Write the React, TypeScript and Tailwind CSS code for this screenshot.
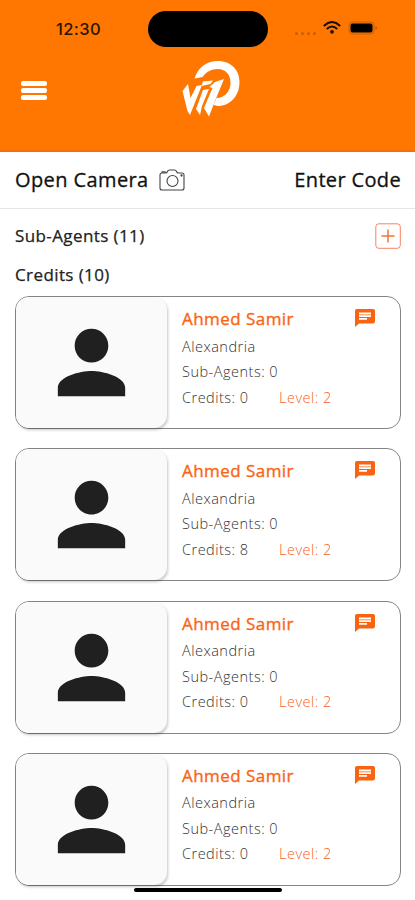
import React from "react";

const agents = [
  { name: "Ahmed Samir", city: "Alexandria", sub: 0, credits: 0, level: 2 },
  { name: "Ahmed Samir", city: "Alexandria", sub: 0, credits: 8, level: 2 },
  { name: "Ahmed Samir", city: "Alexandria", sub: 0, credits: 0, level: 2 },
  { name: "Ahmed Samir", city: "Alexandria", sub: 0, credits: 0, level: 2 },
];

function Logo() {
  return (
    <svg viewBox="0 0 60 58" className="h-[58px] w-[60px]" aria-label="ViP">
      <g fill="#fff">
        <path d="M12.500 17.500C16 7 24 0 36 0C49 0 57.500 9 57.500 21C57.500 35 48 45 36 45L31.500 44L34.500 37C43 37 48.500 30 48.500 22C48.500 13 43 8 36 8C29 8 24 11 20.500 16Z" />
        <path d="M0.500 30L6 23L8.500 37L14.500 25L20 24L8 54L5.500 50Z" />
        <path d="M21 29L27 28L20 45L18 54L14 48Z" />
        <path d="M21 20.500L31 19.500L28.500 23L19.500 25Z" />
        <path d="M33 21L42 18L33 40L27 55.500L22 47L30.500 27L27.500 26Z" />
      </g>
    </svg>
  );
}

function StatusBar() {
  return (
    <div className="flex h-[57px] pt-[11px]">
      <div className="w-[148px] pl-[56px] pt-[7px] font-['Inter',sans-serif] text-[16.500px] font-medium leading-[22px] tracking-[0.4px] text-[#2b1500]">12:30</div>
      <div className="h-[36px] w-[120px] rounded-full bg-black" />
      <div className="ml-[27px] flex pt-[10px]">
        <div className="flex gap-[3px] pt-[11px]">
          {[0, 1, 2, 3].map((i) => (
            <span key={i} className="size-[3px] rounded-full bg-[#c96000]" />
          ))}
        </div>
        <svg viewBox="0 0 18 13" className="ml-[7px] h-[13px] w-[18px]" fill="none" stroke="#1c0d00" strokeWidth="2">
          <path d="M0.800 5Q9 -3 17.200 5M3.800 8Q9 3 14.200 8" />
          <circle cx="9" cy="10.800" r="1.900" fill="#1c0d00" stroke="none" />
        </svg>
        <svg viewBox="0 0 30 14" className="ml-[7px] h-[14px] w-[30px]">
          <rect x="1" y="1" width="25" height="12" rx="3.500" fill="none" stroke="#c96000" />
          <rect x="2.500" y="2.500" width="22" height="9" rx="2" fill="#000" />
          <path d="M27.500 5v4c2-.8 2-3.200 0-4z" fill="#b95700" />
        </svg>
      </div>
    </div>
  );
}

function AgentCard({ agent }: { agent: (typeof agents)[number] }) {
  return (
    <div className="flex h-[133px] rounded-[14px] border border-[#858585] bg-white">
      <div className="flex w-[151px] items-center justify-center rounded-[13px] bg-[#fafafa] pr-[1px] shadow-[1px_2px_3px_rgba(0,0,0,0.22)]">
        <svg viewBox="0 0 24 24" className="h-[101px] w-[101px] shrink-0" fill="#202020">
          <path d="M12 12c2.21 0 4-1.79 4-4s-1.79-4-4-4-4 1.79-4 4 1.79 4 4 4zm0 2c-2.67 0-8 1.34-8 4v2h16v-2c0-2.66-5.33-4-8-4z" />
        </svg>
      </div>
      <div className="flex-1 pl-[15px] pt-[11px] text-[14.500px] font-light text-[#333]">
        <div className="flex justify-between pr-[25px]">
          <span className="text-[17px] font-normal leading-[22px] tracking-[0.450px] text-[#fa6414] [-webkit-text-stroke:0.350px_#fa6414]">{agent.name}</span>
          <svg viewBox="2 2 20 20" preserveAspectRatio="none" className="mt-[1px] h-[18px] w-[20px]" fill="#fa6410">
            <path d="M20 2H4c-1.100 0-1.990.9-1.990 2L2 22l4-4h14c1.100 0 2-.9 2-2V4c0-1.100-.9-2-2-2zM6 9h12v2H6V9zm8 5H6v-2h8v2zm4-6H6V6h12v2z" />
          </svg>
        </div>
        <div className="mt-[3.500px] leading-[25.500px] tracking-[0.500px]">{agent.city}</div>
        <div className="leading-[25.500px] tracking-[0.500px]">Sub-Agents: {agent.sub}</div>
        <div className="flex leading-[25.500px] tracking-[0.500px]">
          <span className="w-[97px]">Credits: {agent.credits}</span>
          <span className="text-[#fb5f25]">Level: {agent.level}</span>
        </div>
      </div>
    </div>
  );
}

export default function App() {
  return (
    <div className="relative h-[900px] w-[415px] overflow-hidden bg-white font-['Open_Sans','Noto_Sans',sans-serif]">
      <header className="h-[152px] border-b-2 border-[#fb6a08] bg-[#ff7700]">
        <StatusBar />
        <div className="flex pl-[21px] pt-[4px]">
          <div className="flex w-[161px] flex-col gap-[2px] pt-[20px]">
            {[0, 1, 2].map((i) => (
              <span key={i} className="h-[5px] w-[26px] rounded-[2px] bg-white" />
            ))}
          </div>
          <Logo />
        </div>
      </header>
      <div className="flex h-[57px] items-center border-b border-[#e5e5e5] pl-[15px] pr-[14px] text-[20px] text-[#111] [-webkit-text-stroke:0.300px_#111]">
        <span className="tracking-[0.4px]">Open Camera</span>
        <svg viewBox="0 0 26 22" className="ml-[10px] h-[22px] w-[26px]" fill="none" stroke="#444" strokeWidth="1.100">
          <path d="M3 4H6.500Q8 4 8.500 2.500Q9 1 10.500 1H15.500Q17 1 17.500 2.500Q18 4 19.500 4H23Q25 4 25 6V19Q25 21 23 21H3Q1 21 1 19V6Q1 4 3 4ZM3 4V2.800H6V4" />
          <circle cx="13.500" cy="12" r="5.500" />
          <circle cx="22.500" cy="6.500" r="0.600" />
        </svg>
        <span className="ml-auto tracking-[0.35px]">Enter Code</span>
      </div>
      <div className="flex items-center justify-between pl-[15px] pr-[14px] pt-[14px] text-[17px] text-[#222] [-webkit-text-stroke:0.250px_#222]">
        <span className="leading-[26px] tracking-[0.4px]">Sub-Agents (11)</span>
        <svg viewBox="0 0 26 26" className="size-[26px]" fill="none">
          <rect x="0.800" y="0.800" width="24.500" height="24.500" rx="3" stroke="#f98262" />
          <path d="M6.500 13H19.500M13 6.500V19.500" stroke="#f47630" strokeWidth="1.500" />
        </svg>
      </div>
      <div className="px-[15px] pt-[13px] text-[17px] leading-[26px] tracking-[0.4px] text-[#222] [-webkit-text-stroke:0.250px_#222]">Credits (10)</div>
      <main className="flex flex-col gap-[19.300px] pl-[15px] pr-[14px] pt-[8px]">
        {agents.map((agent, i) => (
          <AgentCard key={i} agent={agent} />
        ))}
      </main>
      <div className="absolute left-[134px] top-[888px] h-[4px] w-[148px] rounded-full bg-black" />
    </div>
  );
}
